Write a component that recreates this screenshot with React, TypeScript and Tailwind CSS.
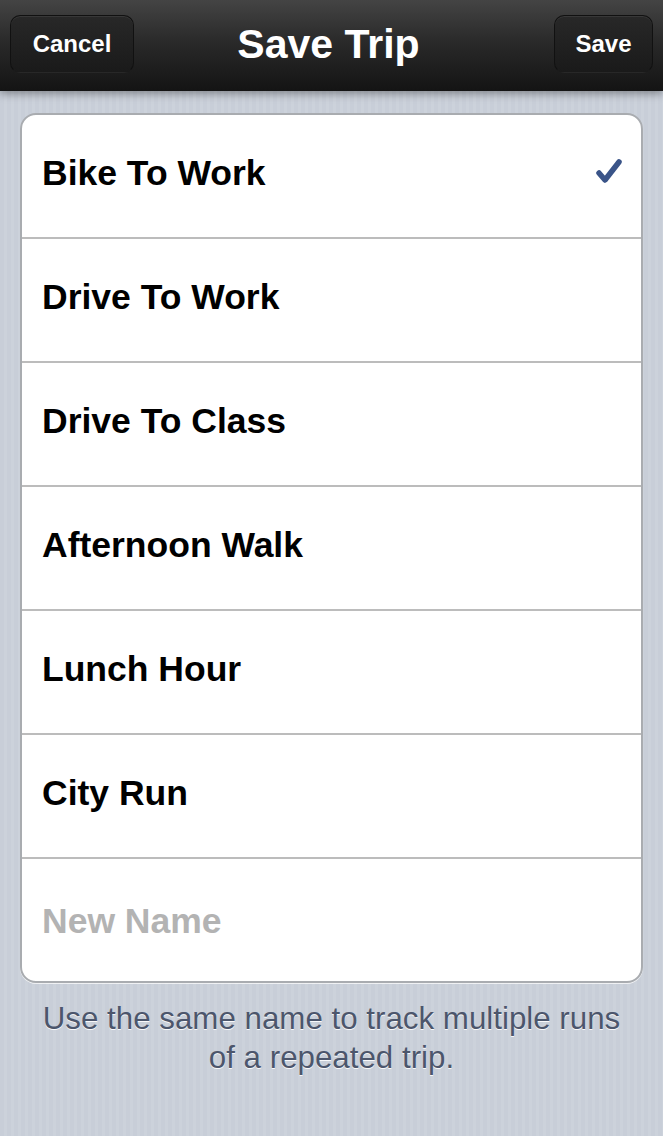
import React from "react";

const rows = [
  "Bike To Work",
  "Drive To Work",
  "Drive To Class",
  "Afternoon Walk",
  "Lunch Hour",
  "City Run",
];

function Check() {
  return (
    <svg width="30" height="30" viewBox="0 0 30 30" className="block mt-[-6px]">
      <path
        d="M6 17 L12 24 L26 6"
        fill="none"
        stroke="#3a5488"
        strokeWidth="5.5"
        strokeLinecap="round"
        strokeLinejoin="round"
      />
    </svg>
  );
}

export default function App() {
  return (
    <div
      className="w-[663px] h-[1136px] overflow-hidden flex flex-col bg-[repeating-linear-gradient(90deg,#c8ced8_0px,#c8ced8_4px,#ccd2db_4px,#ccd2db_7px)]"
      style={{ fontFamily: '"Liberation Sans", Arial, sans-serif' }}
    >
      {/* Nav bar */}
      <div className="relative h-[91px] shrink-0 flex items-center justify-between px-[10px] bg-[linear-gradient(180deg,#444444_0%,#2a2a2a_45%,#141414_100%)] shadow-[0_3px_8px_rgba(0,0,0,0.35)] z-10">
        <div className="h-[58px] w-[124px] mt-[-4px] rounded-[10px] flex items-center justify-center bg-[linear-gradient(180deg,#282828,#1a1a1a)] shadow-[inset_0_1px_0_rgba(255,255,255,0.08)] border border-[#111] border-b-transparent">
          <span className="text-white font-bold text-[24px] leading-none">Cancel</span>
        </div>
        <div className="absolute left-0 right-0 top-[24px] flex justify-center pointer-events-none">
          <span className="text-white font-bold text-[41px] leading-none pr-[6px]">Save Trip</span>
        </div>
        <div className="h-[58px] w-[99px] mt-[-4px] rounded-[10px] flex items-center justify-center bg-[linear-gradient(180deg,#282828,#1a1a1a)] shadow-[inset_0_1px_0_rgba(255,255,255,0.08)] border border-[#111] border-b-transparent">
          <span className="text-white font-bold text-[24px] leading-none">Save</span>
        </div>
      </div>

      {/* Table */}
      <div className="px-[20px] pt-[22px]">
        <div className="bg-white rounded-[16px] border-2 border-[#a9acb0] overflow-hidden shadow-[0_1px_0_rgba(255,255,255,0.7)]">
          {rows.map((r, i) => (
            <div
              key={r}
              className="h-[124px] flex items-center justify-between pl-[20px] pr-[18px] pb-[5px] border-b-2 border-[#bcbcbc]"
            >
              <span className="text-black font-bold text-[35.5px] leading-none">{r}</span>
              {i === 0 && <Check />}
            </div>
          ))}
          <div className="h-[122px] flex items-center pl-[20px] pt-[4px]">
            <span className="text-[#b3b3b3] font-bold text-[35.5px] leading-none">New Name</span>
          </div>
        </div>
      </div>

      {/* Footer */}
      <div className="px-[28px] pt-[16px] text-center text-[31.3px] leading-[39px] text-[#4c566c] [text-shadow:0_1px_0_rgba(255,255,255,0.9)]">
        Use the same name to track multiple runs of a repeated trip.
      </div>
    </div>
  );
}
